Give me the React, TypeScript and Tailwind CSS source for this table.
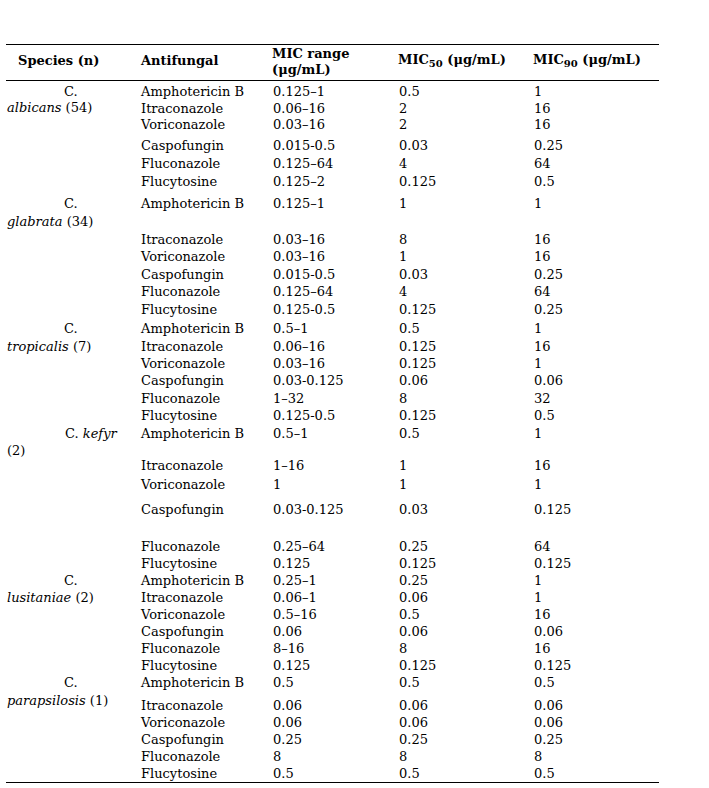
import React from "react";

type Row = [string, string, string, string, number];
type Group = { sp: string; n: string; inline?: boolean; gap: number; rows: Row[] };

const groups: Group[] = [
  {
    sp: "albicans",
    n: "(54)",
    gap: 16,
    rows: [
      ["Amphotericin B", "0.125–1", "0.5", "1", 17],
      ["Itraconazole", "0.06–16", "2", "16", 16],
      ["Voriconazole", "0.03–16", "2", "16", 21],
      ["Caspofungin", "0.015-0.5", "0.03", "0.25", 18],
      ["Fluconazole", "0.125–64", "4", "64", 18],
      ["Flucytosine", "0.125–2", "0.125", "0.5", 22],
    ],
  },
  {
    sp: "glabrata",
    n: "(34)",
    gap: 18,
    rows: [
      ["Amphotericin B", "0.125–1", "1", "1", 36],
      ["Itraconazole", "0.03–16", "8", "16", 17],
      ["Voriconazole", "0.03–16", "1", "16", 18],
      ["Caspofungin", "0.015-0.5", "0.03", "0.25", 17],
      ["Fluconazole", "0.125–64", "4", "64", 18],
      ["Flucytosine", "0.125-0.5", "0.125", "0.25", 19],
    ],
  },
  {
    sp: "tropicalis",
    n: "(7)",
    gap: 18,
    rows: [
      ["Amphotericin B", "0.5–1", "0.5", "1", 18],
      ["Itraconazole", "0.06–16", "0.125", "16", 17],
      ["Voriconazole", "0.03–16", "0.125", "1", 17],
      ["Caspofungin", "0.03-0.125", "0.06", "0.06", 18],
      ["Fluconazole", "1–32", "8", "32", 17],
      ["Flucytosine", "0.125-0.5", "0.125", "0.5", 18],
    ],
  },
  {
    sp: "kefyr",
    n: "(2)",
    inline: true,
    gap: 17,
    rows: [
      ["Amphotericin B", "0.5–1", "0.5", "1", 32],
      ["Itraconazole", "1–16", "1", "16", 19],
      ["Voriconazole", "1", "1", "1", 25],
      ["Caspofungin", "0.03-0.125", "0.03", "0.125", 37],
      ["Fluconazole", "0.25–64", "0.25", "64", 17],
      ["Flucytosine", "0.125", "0.125", "0.125", 17],
    ],
  },
  {
    sp: "lusitaniae",
    n: "(2)",
    gap: 17,
    rows: [
      ["Amphotericin B", "0.25–1", "0.25", "1", 17],
      ["Itraconazole", "0.06–1", "0.06", "1", 17],
      ["Voriconazole", "0.5–16", "0.5", "16", 17],
      ["Caspofungin", "0.06", "0.06", "0.06", 17],
      ["Fluconazole", "8–16", "8", "16", 17],
      ["Flucytosine", "0.125", "0.125", "0.125", 17],
    ],
  },
  {
    sp: "parapsilosis",
    n: "(1)",
    gap: 18,
    rows: [
      ["Amphotericin B", "0.5", "0.5", "0.5", 23],
      ["Itraconazole", "0.06", "0.06", "0.06", 17],
      ["Voriconazole", "0.06", "0.06", "0.06", 17],
      ["Caspofungin", "0.25", "0.25", "0.25", 17],
      ["Fluconazole", "8", "8", "8", 17],
      ["Flucytosine", "0.5", "0.5", "0.5", 17],
    ],
  },
];

export default function App() {
  return (
    <div
      className="w-[709px] h-[788px] bg-white text-black pt-[44px] pl-[6px] text-[13px]"
      style={{ fontFamily: '"DejaVu Serif", serif' }}
    >
      <div className="w-[653px] border-t border-b border-black">
        {/* Header */}
        <div className="flex h-[36px] border-b border-black font-bold leading-[16px]">
          <div className="w-[135px] pl-[12px] pt-[8px]">Species (n)</div>
          <div className="w-[131px] pt-[8px]">Antifungal</div>
          <div className="w-[126px] pt-[1px]">
            <div>MIC range</div>
            <div>(μg/mL)</div>
          </div>
          <div className="w-[135px] pt-[7px]">
            MIC<sub className="text-[10px]">50</sub> (μg/mL)
          </div>
          <div className="w-[126px] pt-[7px]">
            MIC<sub className="text-[10px]">90</sub> (μg/mL)
          </div>
        </div>
        {/* Body */}
        <div className="pt-[2px]">
          {groups.map((g) => (
            <div key={g.sp} className="flex">
              <div className="w-[135px] leading-[17px] pl-[1px]">
                {g.inline ? (
                  <>
                    <div className="pl-[58px]">
                      C. <i>{g.sp}</i>
                    </div>
                    <div style={{ marginTop: g.gap - 17 }}>{g.n}</div>
                  </>
                ) : (
                  <>
                    <div className="pl-[57px]">C.</div>
                    <div style={{ marginTop: g.gap - 17 }}>
                      <i>{g.sp}</i> {g.n}
                    </div>
                  </>
                )}
              </div>
              <div className="flex flex-col">
                {g.rows.map((r, i) => (
                  <div
                    key={i}
                    className="flex leading-[17px]"
                    style={{ height: r[4] }}
                  >
                    <div className="w-[131px]">{r[0]}</div>
                    <div className="w-[126px] pl-[1px]">{r[1]}</div>
                    <div className="w-[135px] pl-[1px]">{r[2]}</div>
                    <div className="w-[126px] pl-[1px]">{r[3]}</div>
                  </div>
                ))}
              </div>
            </div>
          ))}
        </div>
      </div>
    </div>
  );
}
